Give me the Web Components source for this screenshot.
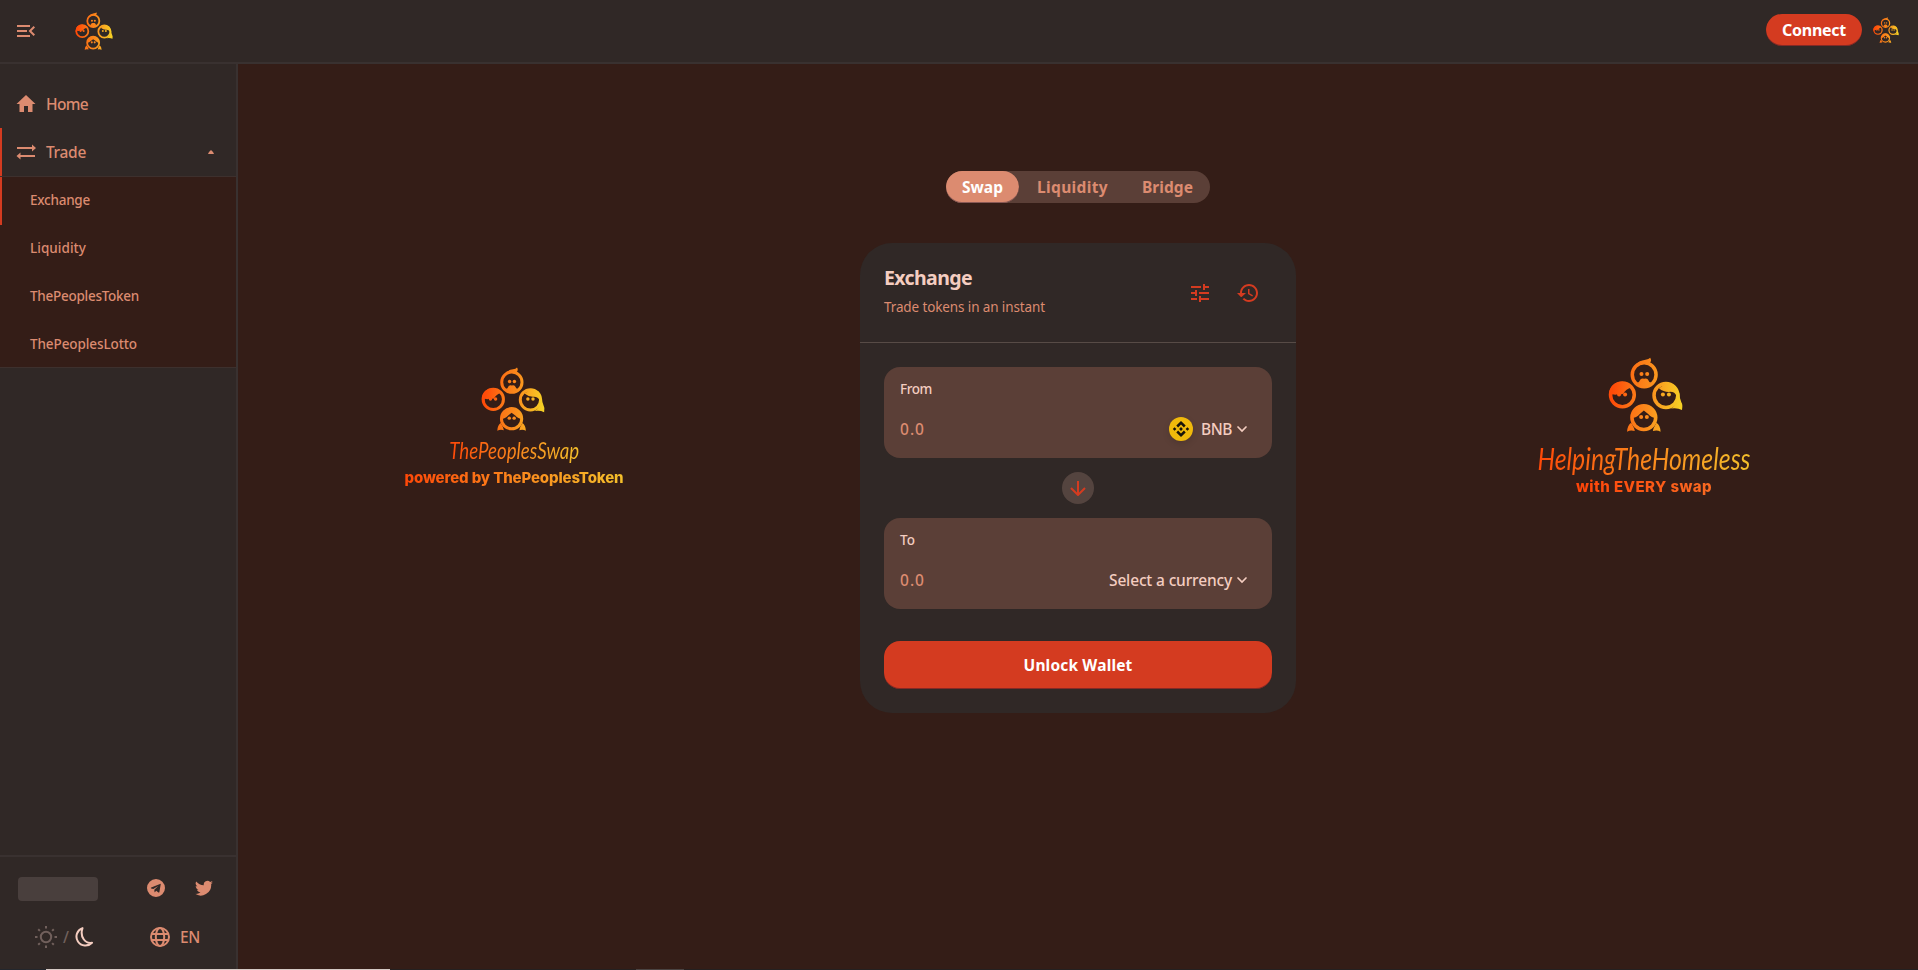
<!DOCTYPE html>
<html lang="en"><head><meta charset="utf-8"><title>ThePeoplesSwap</title>
<style>
html,body{margin:0;height:100%;overflow:hidden;background:#341d17}
body{font-family:"Noto Sans","Liberation Sans",sans-serif;font-size:15.5px;line-height:24px;color:#dc8b70}
</style></head><body>
<swap-app></swap-app>
<script>
const define=(name,html,ready)=>customElements.define(name,class extends HTMLElement{
  constructor(){super();this.attachShadow({mode:'open'}).innerHTML=html;}
  connectedCallback(){if(ready)ready(this,this.shadowRoot);}
});

// Text run fitted to a given width, by tracking or by condensing the glyphs.
define('fit-text','<style>:host{display:inline-block;white-space:nowrap}</style><slot></slot>',el=>{
  const w=+el.getAttribute('w'),n=el.textContent.length,own=el.getBoundingClientRect().width;
  if(el.hasAttribute('condense'))el.style.transform=`scaleX(${w/own})`;
  else el.style.letterSpacing=(w-own)/n+'px';
});

define('people-logo',`<style>:host{display:block;flex:none;width:var(--size,64px);height:var(--size,64px)}svg{display:block;width:100%;height:100%}</style>
<svg viewBox="12 8 224 224"><defs><linearGradient id="g" gradientUnits="userSpaceOnUse" x1="14" y1="110" x2="232" y2="130"><stop offset=".05" stop-color="#ff4a08"/><stop offset=".3" stop-color="#fc7115"/><stop offset=".55" stop-color="#fb8b1c"/><stop offset=".8" stop-color="#f9b222"/><stop offset="1" stop-color="#f6d125"/></linearGradient></defs>
<g fill="none" stroke="url(#g)" stroke-width="10.500"><circle cx="120" cy="61" r="35.500"/><circle cx="55" cy="121" r="35.500"/><circle cx="185" cy="123" r="35.500"/><circle cx="119" cy="189" r="35.500"/></g>
<g fill="url(#g)">
<path d="M92 34Q104 18 124 16Q134 15 138 10Q144 19 136 26L132 31Q112 22 92 42Z"/>
<path d="M99 85Q106 83 107 78Q110 70 120 73Q130 70 133 78Q134 83 141 85L120 99Z"/>
<circle cx="112" cy="59" r="6"/><circle cx="129" cy="59" r="6"/>
<path d="M15 121Q17 83 54 82Q74 84 82 99Q65 104 58 117Q52 122 46 116Q38 123 25 119L22 132Z"/>
<circle cx="45" cy="120" r="6"/><circle cx="63" cy="120" r="6"/>
<path d="M164 101Q180 114 198 112Q212 112 217 125L220 122L214 95L190 84Z"/>
<path d="M225 115Q226 133 231 143Q236 150 233 166Q219 159 200 162Q219 151 220 132Z"/>
<circle cx="176" cy="120" r="6"/><circle cx="194" cy="120" r="6"/>
<path d="M82 190Q97 190 107 178L119 168L132 178Q142 190 156 190Q153 155 119 151Q85 155 82 190Z"/>
<circle cx="111" cy="187" r="6"/><circle cx="128" cy="187" r="6"/>
<path d="M81 204Q91 220 92 229Q79 225 69 231Q70 211 81 204ZM157 204Q147 220 146 229Q159 225 169 231Q168 211 157 204Z"/>
</g></svg>`);

define('app-header',`<style>
:host{display:flex;align-items:center;box-sizing:border-box;height:64px;padding:0 19px 0 17px;background:#302826;border-bottom:2px solid #393130}
.menu{width:18px;height:12px;display:block;margin:0 39.500px 0 0}
.gap{flex:1}
button{border:0;border-radius:16px;width:96px;height:32px;background:#d43b20;box-shadow:inset 0 -1px 0 rgba(14,14,44,.4);color:#fff;font:700 16px "Noto Sans",sans-serif;padding:0;margin:-2px 11px 0 0}
</style><svg class="menu" viewBox="3 6 18 12"><path fill="#dc8b70" d="M3 18h13v-2H3v2zm0-5h10v-2H3v2zm0-7v2h13V6H3zm18 9.590L17.420 12 21 8.410 19.590 7l-5 5 5 5L21 15.590z"/></svg>
<people-logo style="--size:38px"></people-logo><span class="gap"></span><button><fit-text w="64">Connect</fit-text></button><people-logo style="--size:26px;margin-top:-2px"></people-logo>`);

define('nav-item',`<style>
:host{display:flex;align-items:center;box-sizing:border-box;height:48px;padding:0 22px 0 16px;flex:none}
:host([active]){box-shadow:inset 2px 0 #d43b20}
:host([sub]){padding:0 22px 2px 30px;font-size:13.500px}
</style><slot></slot>`);

define('side-bar',`<style>
:host{display:flex;flex-direction:column;box-sizing:border-box;width:238px;background:#302826;border-right:2px solid #393130}
.nav{padding-top:16px;flex:1}
.icon{width:20px;height:20px;margin-right:10px}
.arrow{width:6px;height:4px;margin-left:auto}
.sub{box-sizing:border-box;height:192px;border:solid #3d302d;border-width:1px 0;background:#341d17;overflow:hidden}
.foot{border-top:2px solid #393130;height:114px;padding:20px 23px 0 18px;box-sizing:border-box}
.row{display:flex;align-items:center;height:24px}
.sk{width:80px;height:24px;border-radius:4px;background:#493f3d;margin-right:49px}
svg{display:block;flex:none;fill:#dc8b70}
</style>
<div class="nav">
<nav-item><svg class="icon" viewBox="2 2 20 20"><path d="M10 20v-6h4v6h4.500v-8H21.500L12 3 2.500 12H5.500v8z"/></svg><fit-text w="42">Home</fit-text></nav-item>
<nav-item active><svg class="icon" viewBox="0 0 20 20"><path d="M1 5h15V2.500L20 6l-4 3.500V7H1zM19 13H4.500v-2.500L.500 14l4 3.500V15H19z"/></svg><fit-text w="40">Trade</fit-text><svg class="arrow" viewBox="0 0 6 4"><path d="M0 4Q0 2.500 3 0Q6 2.500 6 4z"/></svg></nav-item>
<div class="sub"><nav-item sub active><fit-text w="60">Exchange</fit-text></nav-item><nav-item sub><fit-text w="56">Liquidity</fit-text></nav-item><nav-item sub><fit-text w="109">ThePeoplesToken</fit-text></nav-item><nav-item sub><fit-text w="107">ThePeoplesLotto</fit-text></nav-item></div>
</div>
<div class="foot"><div class="row"><div class="sk"></div>
<svg width="18" height="18" viewBox="0 0 18 18" style="margin-right:30px;margin-top:-2px"><path fill-rule="evenodd" d="M9 0a9 9 0 1 0 0 18A9 9 0 0 0 9 0ZM13.800 4.700L12.400 13Q12.200 13.900 11.400 13.400L9.200 11.800L8.100 13Q7.600 13.500 7.500 12.700L7.300 10.700L11.300 7L6.300 10.100L4.200 9.400Q3.300 9 4.200 8.600L13 5Q13.900 4.600 13.800 4.700Z"/></svg>
<svg width="18" height="18" viewBox="2 2 20 20" style="margin-top:-2px"><path d="M22 5.900c-.7.300-1.500.6-2.400.7.900-.5 1.500-1.300 1.800-2.300-.8.500-1.700.8-2.600 1a4.100 4.100 0 0 0-7 3.700C8.400 8.800 5.400 7.200 3.400 4.700a4.100 4.100 0 0 0 1.300 5.500c-.7 0-1.300-.2-1.900-.5 0 2 1.400 3.700 3.300 4.100-.6.200-1.200.2-1.900.1.500 1.600 2 2.800 3.900 2.900A8.300 8.300 0 0 1 2 18.500 11.700 11.700 0 0 0 20 8v-.5c.8-.5 1.500-1.200 2-1.600z"/></svg></div>
<div class="row" style="margin-top:24px">
<svg style="margin-left:17px;margin-right:6px" width="22" height="22" viewBox="0 0 22 22"><g fill="none" stroke="#71605c" stroke-width="2"><circle cx="11" cy="11" r="5.200"/><path d="M11 0v2.500M11 19.500V22M0 11h2.500M19.500 11H22M3.200 3.200l1.700 1.700M17.100 17.100l1.700 1.700M3.200 18.800l1.700-1.700M17.100 4.900l1.700-1.700"/></g></svg><span style="color:#71605c;width:6px;margin-right:5px">/</span>
<svg width="20" height="20" viewBox="0 0 20 20" style="margin-right:56px"><path fill="none" stroke="#f4cdc0" stroke-width="2" stroke-linejoin="round" d="M8.500 1.100A9 9 0 1 0 18 15.800C11.500 17 5.500 10 8.500 1.100Z"/></svg>
<svg width="20" height="20" viewBox="0 0 20 20" style="margin-right:10px"><g fill="none" stroke="#dc8b70" stroke-width="2"><circle cx="10" cy="10" r="9"/><ellipse cx="10" cy="10" rx="4.200" ry="9"/><path d="M1.800 7h16.400M1.800 13h16.400"/></g></svg><fit-text w="20">EN</fit-text></div></div>`);

define('brand-art',`<style>
:host{display:flex;flex-direction:column;align-items:center;white-space:nowrap}
::slotted(fit-text){background:linear-gradient(90deg,#ff4808,#fb861c 50%,#f4c02b);-webkit-background-clip:text!important;background-clip:text!important;color:transparent}
</style><slot></slot>`);

define('mode-tabs',`<style>
:host{display:flex;width:264px;height:32px;border-radius:16px;background:#5b3f37;font-weight:700;align-items:center}
.on{width:73px;height:32px;border-radius:16px;background:#dc8b70;box-shadow:inset 0 -1px 0 rgba(14,14,44,.4);color:#fff;display:flex;align-items:center;justify-content:center;margin-right:18px}
</style><span class="on"><fit-text w="41">Swap</fit-text></span><fit-text w="71" style="margin-right:34px">Liquidity</fit-text><fit-text w="51">Bridge</fit-text>`);

define('currency-box',`<style>
:host{display:block;box-sizing:border-box;height:91px;border-radius:16px;background:#5b3f37;padding:12px 24px 0 16px;color:#f4cdc0}
.l{font-size:13.500px;line-height:21px;height:21px}
.r{display:flex;align-items:center;height:32px;margin-top:13px}
.n{color:#dc8b70;margin-right:auto}
.c{margin-left:4px}
</style><div class="l"><slot name="label"></slot></div><div class="r"><fit-text class="n" w="25">0.0</fit-text><slot></slot><svg class="c" width="12" height="12" viewBox="0 0 12 12"><path d="M2 4l4 4 4-4" fill="none" stroke="#f4cdc0" stroke-width="1.700" stroke-linecap="round"/></svg></div>`);

define('exchange-card',`<style>
:host{display:block;box-sizing:border-box;width:436px;height:470px;border-radius:32px;background:#302826;overflow:hidden}
.h{display:flex;align-items:center;box-sizing:border-box;height:100px;border-bottom:1px solid #574b46;padding:0 36px 0 24px}
.t{margin-right:auto}
.title{font-weight:700;font-size:19.500px;color:#f4cdc0;line-height:22px;margin-bottom:8px;height:22px}
.sub{font-size:13.500px;line-height:21px;height:21px;font-weight:400}
.b{padding:24px}
.mid{height:60px;display:flex;align-items:center;justify-content:center}
.circle{width:32px;height:32px;border-radius:50%;background:#54443f;display:flex;align-items:center;justify-content:center}
.coin{margin-right:8px;filter:drop-shadow(0 3px 3px rgba(0,0,0,.12))}
button{display:block;width:100%;height:48px;margin-top:32px;border:0;border-radius:16px;background:#d43b20;box-shadow:inset 0 -1px 0 rgba(14,14,44,.4);color:#fff;font:700 15.500px "Noto Sans",sans-serif}
svg{display:block}
</style>
<div class="h"><div class="t"><div class="title"><fit-text w="88" style="line-height:22px">Exchange</fit-text></div><div class="sub"><fit-text w="161">Trade tokens in an instant</fit-text></div></div>
<svg width="24" height="24" viewBox="0 0 24 24" style="margin-right:24px"><path fill="#d43b20" d="M3 17v2h6v-2H3zM3 5v2h10V5H3zm10 16v-2h8v-2h-8v-2h-2v6h2zM7 9v2H3v2h4v2h2V9H7zm14 4v-2H11v2h10zm-6-4h2V7h4V5h-4V3h-2v6z"/></svg>
<svg width="24" height="24" viewBox="0 0 24 24"><path fill="#d43b20" d="M13 3c-4.970 0-9 4.030-9 9H1l3.890 3.890.7.140L10 12H6c0-3.870 3.130-7 7-7s7 3.130 7 7-3.130 7-7 7c-1.930 0-3.680-.790-4.940-2.060l-1.420 1.420C8.270 19.990 10.510 21 13 21c4.970 0 9-4.030 9-9s-4.030-9-9-9zm-1 5v5l4.280 2.540.720-1.210-3.500-2.080V8H12z"/></svg></div>
<div class="b"><currency-box><fit-text slot="label" w="32">From</fit-text>
<svg class="coin" width="24" height="24" viewBox="0 0 24 24"><circle cx="12" cy="12" r="12" fill="#f0b90b"/><path d="M12 4l4.700 4.600-1.800 1.800L12 7.500l-2.900 2.900-1.800-1.800zM12 20l4.700-4.600-1.800-1.800L12 16.500l-2.900-2.900-1.800 1.800zM5.600 10.200L7.400 12l-1.800 1.800L3.800 12zM18.400 10.200l1.800 1.800-1.800 1.800-1.800-1.800zM12 10.100l1.900 1.900-1.900 1.900-1.900-1.900z" fill="#17130a"/></svg><fit-text w="31">BNB</fit-text></currency-box>
<div class="mid"><div class="circle"><svg width="16" height="16" viewBox="0 0 16 16"><path d="M8 1v13.500M1 8l7 7 7-7" fill="none" stroke="#d43b20" stroke-width="2"/></svg></div></div>
<currency-box><fit-text slot="label" w="15">To</fit-text><fit-text w="123">Select a currency</fit-text></currency-box>
<button><fit-text w="109">Unlock Wallet</fit-text></button></div>`);

define('swap-app',`<style>
:host{display:flex;flex-direction:column;height:970px;width:1918px;overflow:hidden;font-weight:500}
.body{display:flex;height:905px;overflow:hidden}
main{flex:1;display:grid;grid-template-columns:548px 584px 548px;background:#341d17}
.mid{display:flex;flex-direction:column;align-items:center;padding-top:107px}
mode-tabs{margin-bottom:40px}
.left{padding-top:303px;margin-left:4px}.right{padding-top:293px}
.script{font:italic 400 24px/30px Lato,"Liberation Sans",sans-serif}
.round{font:800 15px/20px Inter,sans-serif}
.edge{display:flex;height:1px;background:#252121}
.edge i{display:block;height:1px}
</style><app-header></app-header><div class="body"><side-bar></side-bar><main>
<brand-art class="left"><people-logo style="margin-right:3px"></people-logo><fit-text condense class="script" w="130" style="margin:4px 0 3px">ThePeoplesSwap</fit-text><fit-text class="round" w="219">powered by ThePeoplesToken</fit-text></brand-art>
<div class="mid"><mode-tabs></mode-tabs><exchange-card></exchange-card></div>
<brand-art class="right"><people-logo style="--size:75px;margin-left:3px"></people-logo><fit-text condense class="script" w="213" style="font-size:30px;line-height:38px;margin:7px 0 0">HelpingTheHomeless</fit-text><fit-text class="round" w="136" style="background-image:linear-gradient(90deg,#ff4408,#f96a22)">with EVERY swap</fit-text></brand-art>
</main></div><div class="edge"><i style="width:46px;background:#23272d"></i><i style="width:344px;background:#d5cac5"></i><i style="width:246px"></i><i style="width:48px;background:#4a4443"></i></div>`);
</script></body></html>
